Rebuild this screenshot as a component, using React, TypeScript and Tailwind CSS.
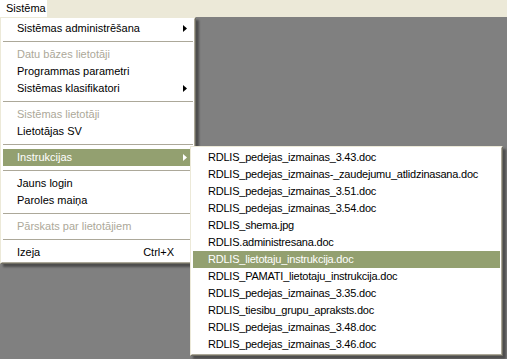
import React from "react"

type Item =
  | { kind: "sep" }
  | { kind: "item"; label: string; disabled?: boolean; sub?: boolean; active?: boolean; shortcut?: string }

const mainItems: Item[] = [
  { kind: "item", label: "Sistēmas administrēšana", sub: true },
  { kind: "sep" },
  { kind: "item", label: "Datu bāzes lietotāji", disabled: true },
  { kind: "item", label: "Programmas parametri" },
  { kind: "item", label: "Sistēmas klasifikatori", sub: true },
  { kind: "sep" },
  { kind: "item", label: "Sistēmas lietotāji", disabled: true },
  { kind: "item", label: "Lietotājas SV" },
  { kind: "sep" },
  { kind: "item", label: "Instrukcijas", sub: true, active: true },
  { kind: "sep" },
  { kind: "item", label: "Jauns login" },
  { kind: "item", label: "Paroles maiņa" },
  { kind: "sep" },
  { kind: "item", label: "Pārskats par lietotājiem", disabled: true },
  { kind: "sep" },
  { kind: "item", label: "Izeja", shortcut: "Ctrl+X" },
]

const docs = [
  "RDLIS_pedejas_izmainas_3.43.doc",
  "RDLIS_pedejas_izmainas-_zaudejumu_atlidzinasana.doc",
  "RDLIS_pedejas_izmainas_3.51.doc",
  "RDLIS_pedejas_izmainas_3.54.doc",
  "RDLIS_shema.jpg",
  "RDLIS.administresana.doc",
  "RDLIS_lietotaju_instrukcija.doc",
  "RDLIS_PAMATI_lietotaju_instrukcija.doc",
  "RDLIS_pedejas_izmainas_3.35.doc",
  "RDLIS_tiesibu_grupu_apraksts.doc",
  "RDLIS_pedejas_izmainas_3.48.doc",
  "RDLIS_pedejas_izmainas_3.46.doc",
]

function Arrow({ light }: { light?: boolean }) {
  return (
    <svg width="4" height="7" viewBox="0 0 4 7" className="shrink-0">
      <path d="M0 0 L4 3.5 L0 7 Z" fill={light ? "#ffffff" : "#000000"} />
    </svg>
  )
}

function MenuFrame({ children, className }: { children: React.ReactNode; className: string }) {
  return (
    <div
      className={`absolute border border-t-[#ece9d8] border-l-[#ece9d8] border-r-[#716f64] border-b-[#716f64] shadow-[3px_3px_2px_rgba(0,0,0,0.4)] ${className}`}
    >
      <div className="border border-t-white border-l-white border-r-[#aca899] border-b-[#aca899] bg-white p-px">
        {children}
      </div>
    </div>
  )
}

export default function App() {
  return (
    <div
      className="relative flex h-[359px] w-[507px] flex-col overflow-hidden bg-[#808080] text-[11px] text-black"
      style={{ fontFamily: '"Liberation Sans", Arial, sans-serif' }}
    >
      <div className="flex h-[17px] shrink-0 items-center bg-[#ece9d8]">
        <div className="flex h-full w-[47px] items-center bg-white pl-[6px]">Sistēma</div>
      </div>

      <MenuFrame className="left-0 top-[17px] w-[196px]">
        {mainItems.map((it, i) =>
          it.kind === "sep" ? (
            <div key={i} className="flex h-[9px] items-center">
              <div className="h-[2px] w-full border-t border-b border-t-[#aca899] border-b-white" />
            </div>
          ) : (
            <div
              key={i}
              className={`flex h-[17px] items-center pl-[14px] pr-[6px] ${
                it.active ? "bg-[#93a070] text-white" : it.disabled ? "text-[#aca899]" : ""
              }`}
            >
              <span className="flex-1">{it.label}</span>
              {it.shortcut && <span className="mr-[13px]">{it.shortcut}</span>}
              {it.sub && <Arrow light={it.active} />}
            </div>
          )
        )}
      </MenuFrame>

      <MenuFrame className="left-[190px] top-[146px] w-[313px]">
        {docs.map((d, i) => (
          <div
            key={d}
            className={`flex h-[17px] items-center pl-[15px] tracking-[-0.22px] ${
              i === 6 ? "bg-[#93a070] text-white" : ""
            }`}
          >
            {d}
          </div>
        ))}
      </MenuFrame>
    </div>
  )
}
